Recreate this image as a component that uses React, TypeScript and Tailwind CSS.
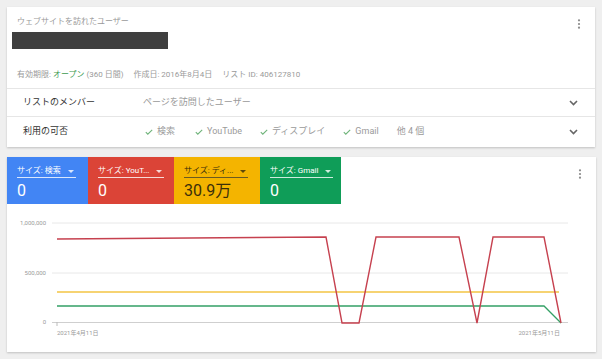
import React from 'react';

const font = { fontFamily: 'Roboto, "Noto Sans CJK JP", sans-serif' };

function MoreVert() {
  return (
    <svg width="4" height="10" viewBox="0 0 4 10" className="text-[#8a8a8a]">
      <circle cx="2" cy="1.3" r="1.1" fill="currentColor" />
      <circle cx="2" cy="5" r="1.1" fill="currentColor" />
      <circle cx="2" cy="8.7" r="1.1" fill="currentColor" />
    </svg>
  );
}

function Chevron() {
  return (
    <svg width="9" height="6" viewBox="0 0 9 6">
      <path d="M1 1l3.5 3.5L8 1" fill="none" stroke="#666" strokeWidth="1.6" />
    </svg>
  );
}

function Check() {
  return (
    <svg width="8" height="6" viewBox="0 0 8 6" className="mr-[4px]">
      <path d="M0.8 3.2l2 2L7.2 0.8" fill="none" stroke="#6fb47a" strokeWidth="1.1" />
    </svg>
  );
}

const tiles = [
  { label: 'サイズ: 検索', value: '0', bg: 'bg-[#4285f4]', fg: 'text-white', line: 'border-white/80', w: 'w-[81px]' },
  { label: 'サイズ: YouT...', value: '0', bg: 'bg-[#db4437]', fg: 'text-white', line: 'border-white/80', w: 'w-[86px]' },
  { label: 'サイズ: ディ...', value: '30.9万', bg: 'bg-[#f4b400]', fg: 'text-[#3b2f0a]', line: 'border-[#6a5a20]', w: 'w-[86px]' },
  { label: 'サイズ: Gmail', value: '0', bg: 'bg-[#0f9d58]', fg: 'text-white', line: 'border-white/80', w: 'w-[81px]' },
];

const red = '50,35 319,33 335,119 352,119 369,33 452,33 470,119 486,33 537,33 554,119';
const green = '50,102 537,102 554,119';

export default function App() {
  return (
    <div className="min-h-[359px] w-[602px] bg-[#efefef] px-[7px] pt-[7px]" style={font}>
      {/* List summary */}
      <div className="w-[588px] bg-white shadow-[0_1px_2px_rgba(0,0,0,0.2)]">
        <div className="relative h-[82px] border-b border-[#e6e6e6] px-[10px]">
          <p className="pt-[10px] text-[8px] leading-[10px] text-[#9a9a9a]">ウェブサイトを訪れたユーザー</p>
          <div className="ml-[-5px] mt-[5px] h-[17px] w-[156px] bg-[#3f3f3f]" />
          <p className="mt-[21px] flex gap-[10px] text-[8px] leading-[10px] text-[#9a9a9a]">
            <span>
              有効期限: <span className="text-[#3d9a50]">オープン</span> (360 日間)
            </span>
            <span>作成日: 2016年8月4日</span>
            <span>リスト ID: 406127810</span>
          </p>
          <div className="absolute right-[14px] top-[12px]">
            <MoreVert />
          </div>
        </div>
        <div className="flex h-[28px] items-center border-b border-[#e6e6e6] pl-[16px] pr-[17px]">
          <span className="w-[120px] text-[9px] text-[#333]">リストのメンバー</span>
          <span className="flex-1 text-[9px] text-[#9a9a9a]">ページを訪問したユーザー</span>
          <Chevron />
        </div>
        <div className="flex h-[30px] items-center pl-[16px] pr-[17px]">
          <span className="w-[122px] text-[9px] text-[#333]">利用の可否</span>
          <div className="flex flex-1 items-center text-[9px] text-[#9a9a9a]">
            <span className="mr-[20px] flex items-center"><Check />検索</span>
            <span className="mr-[18px] flex items-center"><Check />YouTube</span>
            <span className="mr-[18px] flex items-center"><Check />ディスプレイ</span>
            <span className="mr-[18px] flex items-center"><Check />Gmail</span>
            <span>他 4 個</span>
          </div>
          <Chevron />
        </div>
      </div>

      {/* Chart card */}
      <div className="mt-[10px] h-[195px] w-[589px] bg-white shadow-[0_1px_2px_rgba(0,0,0,0.2)]">
        <div className="relative flex h-[47px]">
          {tiles.map((t) => (
            <div key={t.label} className={`${t.bg} ${t.fg} ${t.w} flex h-full flex-col items-start pl-[10px] pt-[9px]`}>
              <div className={`flex items-center gap-[7px] border-b ${t.line} pb-[1px] pr-[2px] text-[8px] leading-[10px]`}>
                {t.label}
                <svg width="6" height="3" viewBox="0 0 6 3" className="opacity-80">
                  <path d="M0 0h6L3 3z" fill="currentColor" />
                </svg>
              </div>
              <div className="mt-[3px] text-[16px] leading-[20px]">{t.value}</div>
            </div>
          ))}
          <div className="absolute right-[14px] top-[12px]">
            <MoreVert />
          </div>
        </div>
        <svg width="589" height="148" viewBox="0 0 589 148" className="block">
          <line x1="45" y1="19" x2="561" y2="19" stroke="#e8e8e8" />
          <line x1="45" y1="69" x2="561" y2="69" stroke="#e8e8e8" />
          <line x1="45" y1="118.5" x2="561" y2="118.5" stroke="#cfcfcf" />
          <line x1="50" y1="118" x2="50" y2="122" stroke="#bbb" />
          <text x="39" y="21" textAnchor="end" fontSize="6" fill="#9a9a9a">1,000,000</text>
          <text x="39" y="71" textAnchor="end" fontSize="6" fill="#9a9a9a">500,000</text>
          <text x="39" y="120" textAnchor="end" fontSize="6" fill="#9a9a9a">0</text>
          <text x="50" y="131" fontSize="6" fill="#9a9a9a">2021年4月11日</text>
          <text x="553" y="131" textAnchor="end" fontSize="6" fill="#9a9a9a">2021年5月11日</text>
          <polyline points="50,88 552,88" fill="none" stroke="#f3c443" strokeWidth="1.3" />
          <polyline points={green} fill="none" stroke="#33a065" strokeWidth="1.3" />
          <polyline points={red} fill="none" stroke="#c6414f" strokeWidth="1.4" />
        </svg>
      </div>
    </div>
  );
}
